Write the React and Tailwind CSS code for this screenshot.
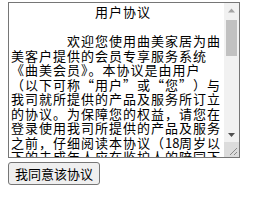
import React from "react";

function Q({ c, side }) {
  return (
    <span className={"inline-block w-[14px] " + (side === "r" ? "text-right" : "text-left")}>{c}</span>
  );
}

function ArrowUp() {
  return (
    <svg width="15" height="15" viewBox="0 0 15 15" className="block">
      <path d="M4 9.5 L7.5 5.5 L11 9.5 Z" fill="#a3a3a3" />
    </svg>
  );
}

function ArrowDown() {
  return (
    <svg width="15" height="15" viewBox="0 0 15 15" className="block">
      <path d="M4 6 L7.5 10 L11 6 Z" fill="#505050" />
    </svg>
  );
}

function Resizer() {
  return (
    <svg width="15" height="15" viewBox="0 0 15 15" className="block">
      <rect width="15" height="15" fill="#dcdcdc" />
      <path d="M13 6 L6 13 M13 10 L10 13" stroke="#8a8a8a" strokeWidth="1" />
    </svg>
  );
}

export default function App() {
  return (
    <div className="pl-2 pt-[2px] bg-white w-[273px] h-[201px] font-['Noto_Sans_CJK_SC','Liberation_Sans',sans-serif]">
      <div className="flex w-[232px] h-[156px] border border-[#767676] bg-white">
        <div className="flex-1 overflow-hidden p-[2px] text-[13px] leading-[14.5px] tracking-[1px] text-black whitespace-nowrap">
          <div>
            <div>　　　　　　用户协议</div>
            <div>&nbsp;</div>
            <div>　　　　欢迎您使用曲美家居为曲</div>
            <div>美客户提供的会员专享服务系统</div>
            <div>《曲美会员》。本协议是由用户</div>
            <div>
              （以下可称<Q c="“" side="r" />用户<Q c="”" side="l" />或<Q c="“" side="r" />您<Q c="”" side="l" />）与
            </div>
            <div>我司就所提供的产品及服务所订立</div>
            <div>的协议。为保障您的权益，请您在</div>
            <div>登录使用我司所提供的产品及服务</div>
            <div>
              之前，仔细阅读本协议（<span className="inline-block w-[14px] tracking-[0px]">18</span>周岁以
            </div>
            <div>下的未成年人应在监护人的陪同下</div>
          </div>
        </div>
        <div className="w-[15px] flex flex-col bg-[#f1f1f1]">
          <ArrowUp />
          <div className="flex-1 px-[2px] pt-[2px]">
            <div className="h-[36px] bg-[#c1c1c1]" />
          </div>
          <ArrowDown />
          <Resizer />
        </div>
      </div>
      <button
        type="button"
        className="mt-[4px] h-[23px] px-[6px] border border-[#767676] rounded-[3px] bg-[#efefef] text-[13px] leading-[20px] text-black"
      >
        我同意该协议
      </button>
    </div>
  );
}
